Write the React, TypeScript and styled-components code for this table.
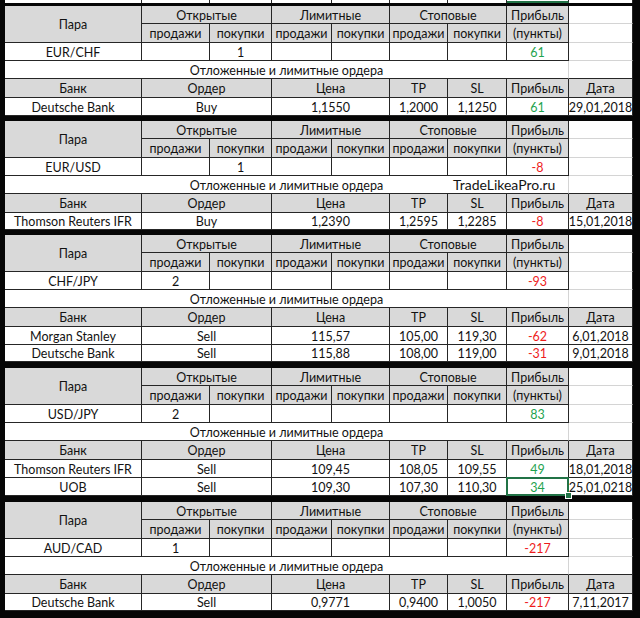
import React from 'react';
import styled, { createGlobalStyle, css } from 'styled-components';

const COLS = '137px 68px 62px 60px 58px 58px 59px 62px 64px';
const DARK = '#262626';
const LIGHT = '#d4d4d4';
const GRAY = '#d9d9d9';
const POS = '#1fa34f';
const NEG = '#ee1c1c';
const SELECT = '#217346';

const GlobalStyle = createGlobalStyle`
  html, body { margin: 0; padding: 0; background: #000; }
  #root { width: 640px; height: 618px; }
`;

const Sheet = styled.div`
  width: 640px;
  height: 618px;
  box-sizing: border-box;
  padding: 0 7px 0 5px;
  background: #060606;
  display: flex;
  flex-direction: column;
  overflow: hidden;
  font-family: Lato, 'Open Sans', 'Liberation Sans', sans-serif;
  font-size: 12.5px;
  color: #121212;
`;

const Spacer = styled.div<{ $h: number }>`
  height: ${(p) => p.$h}px;
  flex: none;
`;

const Strip = styled.div`
  display: grid;
  grid-template-columns: ${COLS};
  grid-template-rows: 3px;
  flex: none;
`;

const StripCell = styled.div<{ $active?: boolean }>`
  background: #fff;
  border-right: 1px solid ${DARK};
  box-sizing: border-box;
  ${(p) =>
    p.$active &&
    css`
      border-bottom: 2px solid ${SELECT};
    `}
`;

const Block = styled.section<{ $rows: string }>`
  display: grid;
  grid-template-columns: ${COLS};
  grid-template-rows: ${(p) => p.$rows};
  flex: none;
`;

type Edge = 'd' | 'l';

const Cell = styled.div<{
  $span?: number;
  $rowSpan?: number;
  $gray?: boolean;
  $r?: Edge;
  $b?: Edge;
  $tone?: 'pos' | 'neg';
  $selected?: boolean;
}>`
  grid-column: span ${(p) => p.$span ?? 1};
  grid-row: span ${(p) => p.$rowSpan ?? 1};
  box-sizing: border-box;
  background: ${(p) => (p.$gray ? GRAY : '#fff')};
  border-right: 1px solid ${(p) => (p.$r === 'l' ? LIGHT : DARK)};
  border-bottom: 1px solid ${(p) => (p.$b === 'l' ? LIGHT : DARK)};
  display: flex;
  align-items: center;
  justify-content: center;
  padding-top: 1px;
  white-space: nowrap;
  position: relative;
  color: ${(p) => (p.$tone === 'pos' ? POS : p.$tone === 'neg' ? NEG : 'inherit')};
  ${(p) =>
    p.$selected &&
    css`
      &::after {
        content: '';
        position: absolute;
        inset: -1px -1px -1px -1px;
        border: 2px solid ${SELECT};
        pointer-events: none;
      }
      &::before {
        content: '';
        position: absolute;
        right: -4px;
        bottom: -4px;
        width: 5px;
        height: 5px;
        background: ${SELECT};
        border: 1px solid #fff;
        z-index: 1;
      }
    `}
`;

const Watermark = styled.span`
  position: absolute;
  left: 448px;
  top: 0;
  bottom: 0;
  display: flex;
  align-items: center;
  font-size: 14px;
  color: #141414;
`;

type Order = {
  bank: string;
  order: string;
  price: string;
  tp: string;
  sl: string;
  profit: number;
  date: string;
  selected?: boolean;
};

type Pair = {
  pair: string;
  sell: string;
  buy: string;
  profit: number;
  rows: string;
  watermark?: string;
  orders: Order[];
};

const PAIRS: Pair[] = [
  {
    pair: 'EUR/CHF',
    sell: '',
    buy: '1',
    profit: 61,
    rows: '18px 19px 18px 18px 19px 18px',
    orders: [
      { bank: 'Deutsche Bank', order: 'Buy', price: '1,1550', tp: '1,2000', sl: '1,1250', profit: 61, date: '29,01,2018' },
    ],
  },
  {
    pair: 'EUR/USD',
    sell: '',
    buy: '1',
    profit: -8,
    rows: '18px 19px 18px 18px 19px 17px',
    watermark: 'TradeLikeaPro.ru',
    orders: [
      { bank: 'Thomson Reuters IFR', order: 'Buy', price: '1,2390', tp: '1,2595', sl: '1,2285', profit: -8, date: '15,01,2018' },
    ],
  },
  {
    pair: 'CHF/JPY',
    sell: '2',
    buy: '',
    profit: -93,
    rows: '18px 19px 18px 18px 19px 18px 17px',
    orders: [
      { bank: 'Morgan Stanley', order: 'Sell', price: '115,57', tp: '105,00', sl: '119,30', profit: -62, date: '6,01,2018' },
      { bank: 'Deutsche Bank', order: 'Sell', price: '115,88', tp: '108,00', sl: '119,00', profit: -31, date: '9,01,2018' },
    ],
  },
  {
    pair: 'USD/JPY',
    sell: '2',
    buy: '',
    profit: 83,
    rows: '18px 19px 18px 18px 19px 18px 18px',
    orders: [
      { bank: 'Thomson Reuters IFR', order: 'Sell', price: '109,45', tp: '108,05', sl: '109,55', profit: 49, date: '18,01,2018' },
      { bank: 'UOB', order: 'Sell', price: '109,30', tp: '107,30', sl: '110,30', profit: 34, date: '25,01,0218', selected: true },
    ],
  },
  {
    pair: 'AUD/CAD',
    sell: '1',
    buy: '',
    profit: -217,
    rows: '18px 19px 18px 18px 19px 17px',
    orders: [
      { bank: 'Deutsche Bank', order: 'Sell', price: '0,9771', tp: '0,9400', sl: '1,0050', profit: -217, date: '7,11,2017' },
    ],
  },
];

const GAPS = [5, 5, 6, 6];

const tone = (n: number) => (n < 0 ? 'neg' : 'pos') as 'pos' | 'neg';

function PairBlock({ data }: { data: Pair }) {
  return (
    <Block $rows={data.rows}>
      <Cell $gray $rowSpan={2}>Пара</Cell>
      <Cell $gray $span={2}>Открытые</Cell>
      <Cell $gray $span={2}>Лимитные</Cell>
      <Cell $gray $span={2}>Стоповые</Cell>
      <Cell $gray>Прибыль</Cell>
      <Cell $b="l" />

      <Cell $gray>продажи</Cell>
      <Cell $gray>покупки</Cell>
      <Cell $gray>продажи</Cell>
      <Cell $gray>покупки</Cell>
      <Cell $gray>продажи</Cell>
      <Cell $gray>покупки</Cell>
      <Cell $gray>(пункты)</Cell>
      <Cell $b="l" />

      <Cell>{data.pair}</Cell>
      <Cell>{data.sell}</Cell>
      <Cell>{data.buy}</Cell>
      <Cell />
      <Cell />
      <Cell />
      <Cell />
      <Cell $tone={tone(data.profit)}>{data.profit}</Cell>
      <Cell $b="l" />

      <Cell $span={8} $r="l">
        Отложенные и лимитные ордера
        {data.watermark && <Watermark>{data.watermark}</Watermark>}
      </Cell>
      <Cell />

      <Cell $gray>Банк</Cell>
      <Cell $gray $span={2}>Ордер</Cell>
      <Cell $gray $span={2}>Цена</Cell>
      <Cell $gray>TP</Cell>
      <Cell $gray>SL</Cell>
      <Cell $gray>Прибыль</Cell>
      <Cell $gray>Дата</Cell>

      {data.orders.map((o) => (
        <React.Fragment key={o.bank + o.date}>
          <Cell>{o.bank}</Cell>
          <Cell $span={2}>{o.order}</Cell>
          <Cell $span={2}>{o.price}</Cell>
          <Cell>{o.tp}</Cell>
          <Cell>{o.sl}</Cell>
          <Cell $tone={tone(o.profit)} $selected={o.selected}>
            {o.profit}
          </Cell>
          <Cell>{o.date}</Cell>
        </React.Fragment>
      ))}
    </Block>
  );
}

export default function App() {
  return (
    <>
      <GlobalStyle />
      <Sheet>
        <Strip>
          {Array.from({ length: 9 }, (_, i) => (
            <StripCell key={i} $active={i === 7} />
          ))}
        </Strip>
        <Spacer $h={3} />
        {PAIRS.map((p, i) => (
          <React.Fragment key={p.pair}>
            <PairBlock data={p} />
            {i < GAPS.length && <Spacer $h={GAPS[i]} />}
          </React.Fragment>
        ))}
      </Sheet>
    </>
  );
}
